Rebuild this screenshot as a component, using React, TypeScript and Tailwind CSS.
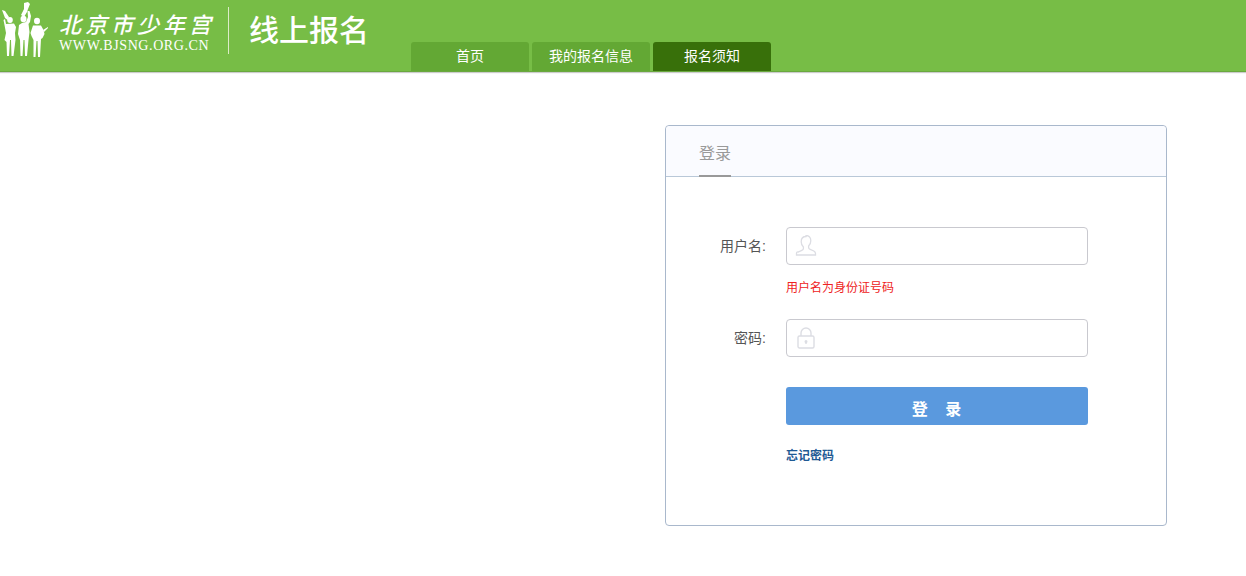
import { useState } from 'react';

const cjk = '"Liberation Sans", "Noto Sans CJK SC", sans-serif';

function KidsLogo() {
  return (
    <svg width="48" height="58" viewBox="0 0 48 58" fill="white" className="shrink-0">
      {/* left kid with trumpet */}
      <ellipse cx="10" cy="20" rx="2.800" ry="3" />
      <path d="M2 10 L5 11 L9 17 L7.500 20 L5 18 Z" />
      <path d="M6 24 L14 23.500 L16 27 L15 33 L15.500 40 L13.500 56 L11.500 56 L11 40 L10 40 L9 56 L7 56 L6.500 42 L4.500 40 L6 33 L4.500 25 L3.500 20 L5 19 Z" />
      {/* middle kid, arm raised */}
      <ellipse cx="23.500" cy="19" rx="3" ry="3.200" />
      <path d="M24 3 L28 2 L30 4 L28 9 L27 12 L24 17 L21 15 L24 9 Z" />
      <path d="M27.500 11 L29.500 11 L31 16 L30 22 L28.500 24 L29.500 32 L28.500 40 L27 56 L25 56 L24.500 40 L23.500 40 L22.500 56 L20.500 56 L20 40 L18 34 L19 25 L22 23 L26 22 L28 17 Z" />
      {/* right kid with drum */}
      <ellipse cx="37" cy="21" rx="3" ry="3.200" />
      <path d="M33 25.500 L41 25.500 L43.500 30 L44.500 34 L42.500 38 L41 39 L40 57 L38 57 L37.500 41 L36.500 41 L35.500 57 L33.500 57 L33.500 40 L31.500 36 L30.500 33 Z" />
      <path d="M43 30 L48 27 L48 28 L44 32 Z" />
    </svg>
  );
}

function UserIcon() {
  return (
    <svg width="22" height="22" viewBox="0 0 22 22" fill="none" stroke="#dcdde3" strokeWidth="1.3">
      <path d="M11 1.500c-3 0-4.800 2.200-4.800 5.200 0 2.200.8 4 2.200 5.200v1.600c0 1-.6 1.500-1.600 1.900l-3.600 1.600C2 16.700 1.500 17.500 1.500 18.500v1.500h19v-1.500c0-1-.5-1.800-1.700-2.500l-3.600-1.600c-1-.4-1.600-.9-1.600-1.900v-1.600c1.400-1.200 2.200-3 2.200-5.200 0-3-1.800-5.200-4.800-5.200z" />
    </svg>
  );
}

function LockIcon() {
  return (
    <svg width="18" height="22" viewBox="0 0 18 22" fill="none" stroke="#dcdde3" strokeWidth="1.4">
      <rect x="1" y="9" width="16" height="12" rx="1.500" />
      <path d="M4 9V6a5 5 0 0 1 10 0v3" />
      <circle cx="9" cy="14.500" r="0.800" fill="#dcdde3" />
      <path d="M9 15v2" />
    </svg>
  );
}

const tabs = ['首页', '我的报名信息', '报名须知'];

export default function App() {
  const [user, setUser] = useState('');
  const [pwd, setPwd] = useState('');
  const active = 2;

  return (
    <div className="min-h-[576px] bg-white" style={{ fontFamily: cjk }}>
      <header className="flex h-[72px] items-end border-b border-[#6aa83f] bg-[#77bd46] shadow-[0_1px_1px_rgba(0,0,0,0.2)]">
        <div className="flex h-full w-[411px] shrink-0 items-start">
          <KidsLogo />
          <div className="ml-[11px] mt-[9px] w-[154px] text-white">
            <div className="whitespace-nowrap text-[22px] leading-[28px] tracking-[4px] font-medium italic" style={{ fontFamily: '"Noto Sans CJK SC", sans-serif' }}>北京市少年宫</div>
            <div className="mt-[1px] whitespace-nowrap text-[14px] leading-[15px] tracking-[0.600px]" style={{ fontFamily: '"Liberation Serif", serif' }}>WWW.BJSNG.ORG.CN</div>
          </div>
          <div className="ml-[15px] mt-[7px] h-[47px] w-px bg-[#dcecc8]" />
          <div className="ml-[20px] mt-[12px] whitespace-nowrap text-[30px] leading-[38px] font-medium text-white">线上报名</div>
        </div>
        <nav className="flex gap-[3px]">
          {tabs.map((t, i) => (
            <a
              key={t}
              href="#"
              className={`flex h-[29px] w-[118px] items-center justify-center rounded-t-[3px] text-[14px] text-white ${
                i === active ? 'bg-[#38700a]' : 'bg-[#63a834]'
              }`}
            >
              {t}
            </a>
          ))}
        </nav>
      </header>

      <main className="flex justify-end pr-[79px] pt-[53px]">
        <div className="h-[401px] w-[502px] rounded-[4px] border border-[#a9b8cc]">
          <div className="h-[51px] rounded-t-[4px] border-b border-[#b9c8d8] bg-[#fafbff] pl-[33px]">
            <div className="inline-block h-[51px] border-b-2 border-[#999] pt-[16px] text-[16px] leading-[24px] text-[#999]">登录</div>
          </div>

          <form className="pl-[33px] pt-[50px]" onSubmit={(e) => e.preventDefault()}>
            <div className="flex items-center">
              <label className="w-[67px] text-right text-[14px] text-[#555]">用户名:</label>
              <div className="ml-[20px] flex h-[38px] w-[302px] items-center rounded-[4px] border border-[#c9c9cf] pl-[8px]">
                <UserIcon />
                <input value={user} onChange={(e) => setUser(e.target.value)} className="ml-2 min-w-0 flex-1 outline-none" />
              </div>
            </div>
            <p className="ml-[87px] mt-[15px] text-[12px] leading-[16px] text-[#ee2222]">用户名为身份证号码</p>

            <div className="mt-[23px] flex items-center">
              <label className="w-[67px] text-right text-[14px] text-[#555]">密码:</label>
              <div className="ml-[20px] flex h-[38px] w-[302px] items-center rounded-[4px] border border-[#c9c9cf] pl-[10px]">
                <LockIcon />
                <input type="password" value={pwd} onChange={(e) => setPwd(e.target.value)} className="ml-2 min-w-0 flex-1 outline-none" />
              </div>
            </div>

            <button className="ml-[87px] mt-[30px] h-[38px] w-[302px] rounded-[3px] bg-[#5a99de] pt-[8px] text-[16px] font-bold tracking-[1px] text-white">
              登&nbsp;&nbsp;&nbsp;录
            </button>
            <a href="#" className="ml-[87px] mt-[23px] block text-[12px] leading-[16px] font-bold text-[#1f5a94]">忘记密码</a>
          </form>
        </div>
      </main>
    </div>
  );
}
